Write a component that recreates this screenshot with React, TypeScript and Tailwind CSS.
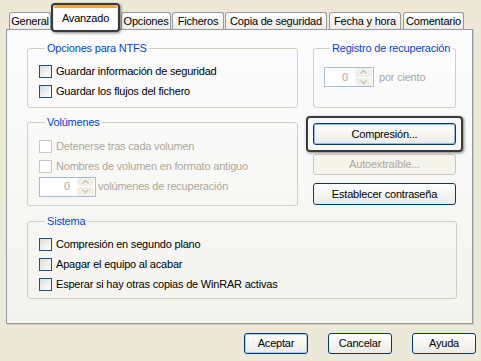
import React from "react";

const Check = ({ disabled }: { disabled?: boolean }) => (
  <span
    className={
      disabled
        ? "w-[13px] h-[13px] shrink-0 border border-[#CAC8BB] bg-white"
        : "w-[13px] h-[13px] shrink-0 border border-[#1C5180] bg-linear-to-br from-[#DCDCD7] to-white"
    }
  />
);

const Row = ({ label, disabled }: { label: string; disabled?: boolean }) => (
  <div className="flex items-center h-[20px] gap-[4px]">
    <Check disabled={disabled} />
    <span className={disabled ? "text-[#ACA899]" : "text-black"}>{label}</span>
  </div>
);

const Spinner = ({ width }: { width: string }) => (
  <div className={`${width} h-[20px] flex items-center border border-[#A7BBD3] bg-white`}>
    <span className="flex-1 text-right pr-[7px] text-[#ACA899]">0</span>
    <span className="w-[17px] h-[18px] mr-[1px] flex flex-col gap-px">
      <span className="flex-1 flex items-center justify-center rounded-[2px] bg-[#F0EFE8]">
        <svg width="7" height="4" viewBox="0 0 7 4">
          <path d="M0.5 3.5 L3.5 0.5 L6.5 3.5" fill="none" stroke="#C5C3B6" strokeWidth="1.3" />
        </svg>
      </span>
      <span className="flex-1 flex items-center justify-center rounded-[2px] bg-[#F0EFE8]">
        <svg width="7" height="4" viewBox="0 0 7 4">
          <path d="M0.5 0.5 L3.5 3.5 L6.5 0.5" fill="none" stroke="#C5C3B6" strokeWidth="1.3" />
        </svg>
      </span>
    </span>
  </div>
);

const Group = ({
  title,
  className,
  children,
}: {
  title: string;
  className?: string;
  children: React.ReactNode;
}) => (
  <fieldset className={`border border-[#D0D0BF] rounded-[3px] ${className ?? ""}`}>
    <legend className="ml-[6px] px-[2px] leading-[13px] text-[#0046D5]">{title}</legend>
    {children}
  </fieldset>
);

const Button = ({
  label,
  disabled,
  def,
  className,
}: {
  label: string;
  disabled?: boolean;
  def?: boolean;
  className?: string;
}) => (
  <button
    className={
      disabled
        ? `rounded-[3px] border border-[#C9C7BA] bg-[#F5F4EA] text-[#ACA899] ${className ?? ""}`
        : `rounded-[3px] border border-[#003C74] bg-linear-to-b from-white to-[#ECEBE6] text-black ${
            def ? "shadow-[inset_0_0_0_1px_#B4CBF0]" : ""
          } ${className ?? ""}`
    }
  >
    {label}
  </button>
);

const Tab = ({ label, className }: { label: string; className: string }) => (
  <div
    className={`h-[17px] flex items-center justify-center rounded-t-[3px] border border-b-0 border-[#919B9C] bg-linear-to-b from-white to-[#ECEBE6] ${className}`}
  >
    {label}
  </div>
);

export default function App() {
  return (
    <div className="w-[481px] h-[361px] bg-[#ECE9D8] font-['Liberation_Sans',sans-serif] text-[11px] tracking-[-0.2px] text-black select-none">
      <div className="flex items-end h-[29px] pl-[9px]">
        <Tab label="General" className="w-[42px]" />
        <div className="relative z-10 -mb-[3px] w-[69px] h-[29px] rounded-[4px] border-2 border-[#3A3A3A] shadow-[1px_1px_3px_rgba(0,0,0,0.5)] bg-[#ECE9D8]">
          <div className="h-full mx-px flex items-center justify-center rounded-t-[3px] border-t-[3px] border-[#F1A63A] bg-[#FCFCFE] pb-[2px]">
            Avanzado
          </div>
        </div>
        <Tab label="Opciones" className="w-[50px] ml-px" />
        <Tab label="Ficheros" className="w-[52px] ml-px" />
        <Tab label="Copia de seguridad" className="w-[102px] ml-px" />
        <Tab label="Fecha y hora" className="w-[72px] ml-[2px]" />
        <Tab label="Comentario" className="w-[61px] ml-[2px]" />
      </div>

      <div className="ml-[6px] mr-[8px] h-[295px] border border-[#919B9C] bg-linear-to-b from-[#FCFCFE] to-[#F4F3EE] shadow-[1px_1px_0_#D0CEBF] pt-[12px] pl-[20px]">
        <div className="grid grid-cols-[271px_143px] gap-x-[15px]">
          <Group title="Opciones para NTFS" className="pl-[11px] pt-[6px] pb-[6px]">
            <Row label="Guardar información de seguridad" />
            <Row label="Guardar los flujos del fichero" />
          </Group>
          <Group title="Registro de recuperación" className="pl-[10px] pt-[12px]">
            <div className="flex items-center gap-[5px]">
              <Spinner width="w-[50px]" />
              <span className="text-[#ACA899]">por ciento</span>
            </div>
          </Group>

          <Group title="Volúmenes" className="mt-[8px] pl-[11px] pt-[7px] pb-[8px]">
            <Row label="Detenerse tras cada volumen" disabled />
            <Row label="Nombres de volumen en formato antiguo" disabled />
            <div className="flex items-center gap-[2px] h-[21px]">
              <Spinner width="w-[57px]" />
              <span className="text-[#ACA899]">volúmenes de recuperación</span>
            </div>
          </Group>
          <div className="mt-[15px] flex flex-col gap-[8px]">
            <div className="-mx-[7px] -my-[7px] p-[5px] rounded-[4px] border-2 border-[#3A3A3A] shadow-[1px_1px_3px_rgba(0,0,0,0.5)] bg-[#F8F8F6]">
              <Button label="Compresión..." className="w-full h-[22px] shadow-[inset_0_0_0_1px_#98B8EA]" />
            </div>
            <Button label="Autoextraíble..." disabled className="h-[21px] mt-[1px]" />
            <Button label="Establecer contraseña" className="h-[22px]" />
          </div>
        </div>

        <Group title="Sistema" className="mt-[9px] w-[430px] pl-[11px] pt-[6px] pb-[4px]">
          <Row label="Compresión en segundo plano" />
          <Row label="Apagar el equipo al acabar" />
          <Row label="Esperar si hay otras copias de WinRAR activas" />
        </Group>
      </div>

      <div className="flex justify-end gap-[20px] pr-[5px] mt-[9px]">
        <Button label="Aceptar" def className="w-[64px] h-[21px]" />
        <Button label="Cancelar" className="w-[64px] h-[21px]" />
        <Button label="Ayuda" className="w-[64px] h-[21px]" />
      </div>
    </div>
  );
}
